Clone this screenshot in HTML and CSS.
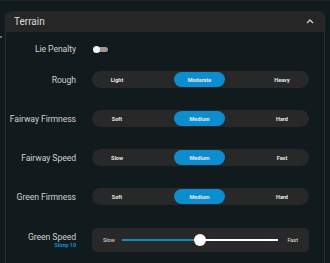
FILE: index.html
```html
<!DOCTYPE html>
<html>
<head>
	<meta charset="utf-8"/>
	<title>Terrain</title>
	<link rel="stylesheet" href="styles.css">
</head>
<body>
	<div class="screen">
		<div class="gutter"><div class="notch"></div></div>
		<div class="panel">
			<div class="panel-head">
				<span>Terrain</span>
				<svg class="chevron" width="8" height="5" viewBox="0 0 8 5"><path d="M1 4 L4 1 L7 4" fill="none" stroke="#cfcfcf" stroke-width="1.3"/></svg>
			</div>
			<div class="panel-body">
				<div class="row first">
					<div class="label">Lie Penalty</div>
					<div class="toggle"><div class="knob"></div></div>
				</div>
				<div class="row second">
					<div class="label">Rough</div>
					<div class="segments">
						<div class="seg">Light</div>
						<div class="seg active">Moderate</div>
						<div class="seg">Heavy</div>
					</div>
				</div>
				<div class="row">
					<div class="label">Fairway Firmness</div>
					<div class="segments">
						<div class="seg">Soft</div>
						<div class="seg active">Medium</div>
						<div class="seg">Hard</div>
					</div>
				</div>
				<div class="row">
					<div class="label">Fairway Speed</div>
					<div class="segments">
						<div class="seg">Slow</div>
						<div class="seg active">Medium</div>
						<div class="seg">Fast</div>
					</div>
				</div>
				<div class="row">
					<div class="label">Green Firmness</div>
					<div class="segments">
						<div class="seg">Soft</div>
						<div class="seg active">Medium</div>
						<div class="seg">Hard</div>
					</div>
				</div>
				<div class="row slider-row">
					<div class="label">Green Speed<div class="sub">Stimp 10</div></div>
					<div class="slider">
						<span class="end">Slow</span>
						<div class="track">
							<div class="fill" style="width: 50%"></div>
							<div class="thumb"></div>
							<div class="rest"></div>
						</div>
						<span class="end">Fast</span>
					</div>
				</div>
			</div>
		</div>
	</div>
</body>
</html>
```

FILE: styles.css
```css
body {
	margin: 0;
	background: #111a1d;
	font-family: Roboto, "Liberation Sans", sans-serif;
	color: #d2d2d2;
}
.screen {
	display: flex;
	height: 263px;
	border-top: 1px solid #1c2427;
	box-sizing: border-box;
}
.gutter {
	width: 5px;
}
.notch {
	width: 2px;
	height: 2px;
	margin-top: 35px;
	background: #6b7174;
}
.panel {
	width: 320px;
	height: 254px;
	margin-top: 10px;
	box-sizing: border-box;
	border-left: 1px solid #262e31;
	border-right: 1px solid #262e31;
	border-bottom: 1px solid #262e31;
	border-radius: 6px 6px 0 0;
	display: flex;
	flex-direction: column;
}
.panel-head {
	height: 21px;
	background: #262626;
	border-radius: 6px 6px 0 0;
	display: flex;
	align-items: center;
	justify-content: space-between;
	padding: 0 10px 0 8px;
	font-size: 10px;
	color: #dcdcdc;
}
.chevron {
	display: block;
}
.panel-body {
	display: flex;
	flex-direction: column;
}
.row {
	display: flex;
	align-items: center;
	height: 17px;
	margin-top: 22px;
}
.row.first {
	margin-top: 8px;
	height: 18px;
}
.row.second {
	margin-top: 13px;
}
.label {
	width: 70px;
	text-align: right;
	font-size: 8.7px;
	letter-spacing: -0.1px;
	margin-right: 16px;
	white-space: nowrap;
	color: #cfcfcf;
}
.toggle {
	position: relative;
	width: 12px;
	height: 5px;
	margin-left: 4px;
	border-radius: 3px;
	background: #a1938f;
}
.knob {
	position: absolute;
	left: -3px;
	top: -1px;
	width: 7px;
	height: 7px;
	border-radius: 50%;
	background: #f2f5ff;
}
.segments {
	width: 217px;
	height: 17px;
	box-sizing: border-box;
	padding: 1px 2px 1px 0;
	border-radius: 9px;
	background: #282828;
	display: grid;
	grid-template-columns: 50px 51px 50px;
	justify-content: space-between;
}
.seg {
	display: flex;
	align-items: center;
	justify-content: center;
	font-size: 5.5px;
	font-weight: bold;
	color: #e8e8e8;
	border-radius: 8px;
}
.seg.active {
	background: #0b8dcf;
}
.slider-row {
	height: 24px;
	margin-top: 23px;
}
.slider-row .label {
	line-height: 10px;
}
.sub {
	font-size: 5.5px;
	line-height: 7px;
	color: #0b8dcf;
	font-weight: bold;
}
.slider {
	width: 217px;
	height: 24px;
	box-sizing: border-box;
	padding: 0 11px 0 11px;
	border-radius: 5px;
	background: #282828;
	display: flex;
	align-items: center;
}
.end {
	font-size: 5.5px;
	color: #e0e0e0;
	width: 16px;
}
.end:last-child {
	text-align: right;
}
.track {
	flex: 1;
	display: flex;
	align-items: center;
	margin: 0 4px 0 3px;
}
.fill {
	height: 2px;
	background: #0b8dcf;
}
.thumb {
	width: 12px;
	height: 12px;
	margin: 0 -6px;
	border-radius: 50%;
	background: #ffffff;
	position: relative;
}
.rest {
	flex: 1;
	height: 2px;
	background: #ffffff;
}
```
